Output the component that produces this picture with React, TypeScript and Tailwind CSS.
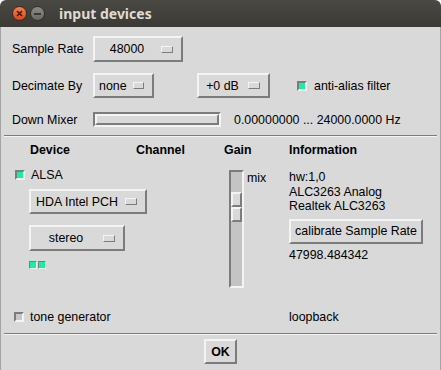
import React from 'react';

// Tk-style raised menubutton with the small indicator box on the right
const MenuButton: React.FC<{ label: string; className: string }> = ({ label, className }) => (
  <div
    className={`flex items-center border-2 border-t-[#f4f4f4] border-l-[#f4f4f4] border-b-[#7c7c7c] border-r-[#7c7c7c] bg-[#d9d9d9] ${className}`}
  >
    <span className="flex-1 pl-[4px] text-center whitespace-nowrap">{label}</span>
    <span className="ml-[6px] mr-[8px] h-[7px] w-[12px] border border-t-[#f4f4f4] border-l-[#f4f4f4] border-b-[#7c7c7c] border-r-[#7c7c7c] bg-[#d9d9d9]" />
  </div>
);

const Button: React.FC<{ label: string; className: string }> = ({ label, className }) => (
  <div
    className={`flex items-center justify-center border-2 border-t-[#f4f4f4] border-l-[#f4f4f4] border-b-[#7c7c7c] border-r-[#7c7c7c] bg-[#d9d9d9] whitespace-nowrap ${className}`}
  >
    {label}
  </div>
);

const Check: React.FC<{ on?: boolean }> = ({ on }) => (
  <span
    className={`h-[10px] w-[10px] shrink-0 border-2 border-t-[#7c7c7c] border-l-[#7c7c7c] border-b-[#f4f4f4] border-r-[#f4f4f4] ${
      on ? 'bg-[#14f0a4]' : 'bg-[#c8c8c8]'
    }`}
  />
);

const Separator: React.FC<{ className: string }> = ({ className }) => (
  <div className={`h-[2px] border-t border-t-[#7c7c7c] border-b border-b-[#f4f4f4] ${className}`} />
);

const TitleBar = () => (
  <div className="flex h-[27px] items-center rounded-t-[6px] bg-gradient-to-b from-[#4a4944] to-[#3a3935] pl-[12px]">
    <span className="flex h-[15px] w-[15px] items-center justify-center rounded-full border border-[#3a2a22] bg-gradient-to-b from-[#f5804f] to-[#d9441a]">
      <svg width="7" height="7" viewBox="0 0 7 7">
        <path d="M1 1 L6 6 M6 1 L1 6" stroke="#3b1d10" strokeWidth="1.6" />
      </svg>
    </span>
    <span className="ml-[3px] flex h-[15px] w-[15px] items-center justify-center rounded-full border border-[#30302c] bg-gradient-to-b from-[#8c8b86] to-[#6a6964]">
      <span className="h-[2px] w-[7px] bg-[#3a3935]" />
    </span>
    <span className="ml-[14px] font-['Noto_Sans',sans-serif] text-[14px] font-bold text-[#dfdbd2]">input devices</span>
  </div>
);

export default function App() {
  return (
    <div className="h-[370px] w-[441px] bg-white font-['Liberation_Sans',Arial,sans-serif] text-[12.4px] leading-[14px] text-black">
      <TitleBar />
      <div className="flex h-[343px] flex-col border-x border-x-[#a4a4a4] bg-[#d9d9d9]">
        {/* Sample rate */}
        <div className="mt-[9px] flex h-[26px] items-center pl-[11px]">
          <span className="w-[81px]">Sample Rate</span>
          <MenuButton label="48000" className="h-[26px] w-[90px]" />
        </div>

        {/* Decimate */}
        <div className="mt-[11px] flex h-[25px] items-center pl-[11px]">
          <span className="w-[81px]">Decimate By</span>
          <MenuButton label="none" className="h-[25px] w-[61px]" />
          <MenuButton label="+0 dB" className="ml-[43px] h-[25px] w-[73px]" />
          <span className="ml-[27px] flex items-center">
            <Check on />
          </span>
          <span className="ml-[7px]">anti-alias filter</span>
        </div>

        {/* Down mixer */}
        <div className="mt-[14px] flex h-[15px] items-center pl-[11px]">
          <span className="w-[81px]">Down Mixer</span>
          <div className="h-[15px] w-[128px] border-2 border-t-[#7c7c7c] border-l-[#7c7c7c] border-b-[#f4f4f4] border-r-[#f4f4f4] bg-[#c4c4c4]">
            <div className="h-full w-full border-2 border-t-[#f4f4f4] border-l-[#f4f4f4] border-b-[#7c7c7c] border-r-[#7c7c7c] bg-[#d9d9d9]" />
          </div>
          <span className="ml-[13px]">0.00000000 ... 24000.0000 Hz</span>
        </div>

        <Separator className="mx-[3px] mt-[8px]" />

        {/* Column headers */}
        <div className="mt-[6px] flex h-[14px] pl-[29px] font-bold">
          <span className="w-[106px]">Device</span>
          <span className="w-[88px]">Channel</span>
          <span className="w-[65px]">Gain</span>
          <span>Information</span>
        </div>

        <div className="mt-[13px] flex">
          {/* Device */}
          <div className="flex w-[228px] flex-col pl-[14px]">
            <div className="flex h-[10px] items-center">
              <Check on />
              <span className="ml-[6px]">ALSA</span>
            </div>
            <MenuButton label="HDA Intel PCH" className="ml-[14px] mt-[9px] h-[25px] w-[118px]" />
            <MenuButton label="stereo" className="ml-[14px] mt-[11px] h-[26px] w-[96px]" />
            <div className="ml-[14px] mt-[10px] flex gap-[1px]">
              <span className="h-[8px] w-[8px] border border-t-[#7c7c7c] border-l-[#7c7c7c] border-b-[#f4f4f4] border-r-[#f4f4f4] bg-[#14f0a4]" />
              <span className="h-[8px] w-[8px] border border-t-[#7c7c7c] border-l-[#7c7c7c] border-b-[#f4f4f4] border-r-[#f4f4f4] bg-[#14f0a4]" />
            </div>
          </div>

          {/* Gain */}
          <div className="flex w-[60px]">
            <div className="flex h-[118px] w-[15px] flex-col border-2 border-t-[#7c7c7c] border-l-[#7c7c7c] border-b-[#f4f4f4] border-r-[#f4f4f4] bg-[#c4c4c4]">
              <div className="mt-[20px] flex h-[30px] flex-col">
                <div className="h-[15px] border-2 border-t-[#f4f4f4] border-l-[#f4f4f4] border-b-[#7c7c7c] border-r-[#7c7c7c] bg-[#d9d9d9]" />
                <div className="h-[15px] border-2 border-t-[#f4f4f4] border-l-[#f4f4f4] border-b-[#7c7c7c] border-r-[#7c7c7c] bg-[#d9d9d9]" />
              </div>
            </div>
            <span className="ml-[3px] mt-[1px]">mix</span>
          </div>

          {/* Information */}
          <div className="flex flex-col">
            <span className="leading-[14.5px]">hw:1,0</span>
            <span className="leading-[14.5px]">ALC3263 Analog</span>
            <span className="leading-[14.5px]">Realtek ALC3263</span>
            <Button label="calibrate Sample Rate" className="mt-[5px] h-[25px] w-[134px]" />
            <span className="mt-[4px]">47998.484342</span>
          </div>
        </div>

        {/* Bottom row */}
        <div className="mt-[22px] flex h-[14px] items-center">
          <span className="flex w-[288px] items-center pl-[13px]">
            <Check />
            <span className="ml-[6px]">tone generator</span>
          </span>
          <span>loopback</span>
        </div>

        <Separator className="mx-[3px] mt-[9px]" />

        <Button label="OK" className="mx-auto mt-[4px] h-[25px] w-[33px] font-bold" />
      </div>
    </div>
  );
}
